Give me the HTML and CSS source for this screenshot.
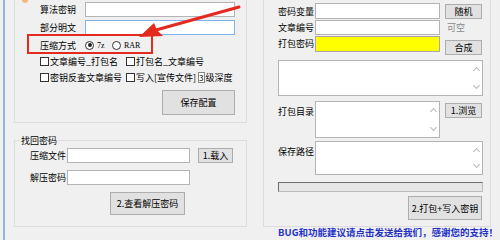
FILE: index.html
```html
<!DOCTYPE html>
<html>
<head>
<meta charset="utf-8">
<link rel="stylesheet" href="styles.css">
</head>
<body>
<div class="win">
  <div class="main">
    <div class="left">
      <div class="group upper">
        <span class="corner"></span>
        <div class="row r1"><span class="lbl">算法密钥</span><span class="inp w150"></span></div>
        <div class="row r2"><span class="lbl">部分明文</span><span class="inp w150 focus"></span></div>
        <div class="row r3"><span class="lbl">压缩方式</span>
          <span class="radio on"></span><span class="rtxt">7z</span>
          <span class="radio"></span><span class="rtxt">RAR</span>
        </div>
        <div class="row r4"><span class="cell"><span class="chk"></span>文章编号_打包名</span><span class="cell"><span class="chk"></span>打包名_文章编号</span></div>
        <div class="row r5"><span class="cell"><span class="chk"></span>密钥反查文章编号</span><span class="cell"><span class="chk"></span>写入[宣传文件]<span class="mini">3</span>级深度</span></div>
        <div class="row r6"><span class="btn big">保存配置</span></div>
      </div>
      <fieldset class="group lower">
        <legend>找回密码</legend>
        <div class="row l1"><span class="lbl2">压缩文件</span><span class="inp w123"></span><span class="btn sm">1.载入</span></div>
        <div class="row l2"><span class="lbl2">解压密码</span><span class="inp w123"></span></div>
        <div class="row l3"><span class="btn big2">2.查看解压密码</span></div>
      </fieldset>
    </div>
    <div class="group right">
      <div class="row q1"><span class="lbl3">密码变量</span><span class="inp w125"></span><span class="btn rb">随机</span></div>
      <div class="row q2"><span class="lbl3">文章编号</span><span class="inp w125"></span><span class="hint">可空</span></div>
      <div class="row q3"><span class="lbl3">打包密码</span><span class="inp w125 yellow"></span><span class="btn rb down">合成</span></div>
      <div class="area wide"><span class="sb"><i class="up"></i><i class="dn"></i></span></div>
      <div class="row q4"><span class="lbl3 top">打包目录</span><div class="area dir"><span class="sb"><i class="up"></i><i class="dn"></i></span></div><span class="btn rb">1.浏览</span></div>
      <div class="row q5"><span class="lbl3 top">保存路径</span><div class="area save"><span class="sb"><i class="up"></i><i class="dn"></i></span></div></div>
      <div class="progress"></div>
      <div class="row q6"><span class="btn big3">2.打包+写入密钥</span></div>
    </div>
  </div>
  <div class="footer">BUG和功能建议请点击发送给我们，感谢您的支持！</div>

  <div class="redbox"></div>
  <svg class="arrow" width="500" height="240" viewBox="0 0 500 240">
    <path d="M239 7 L156 30" stroke="#e42a1e" stroke-width="3" stroke-linecap="round" fill="none"/>
    <path d="M139 37 L154 23 L157 30 L163 36 Z" fill="#e42a1e"/>
  </svg>
</div>
</body>
</html>
```
FILE: styles.css
```css
html, body { margin: 0; padding: 0; }
body {
  width: 500px; height: 240px; overflow: hidden;
  background: #f0f0f0;
  font-family: "Noto Sans CJK SC", "Liberation Sans", sans-serif;
  font-size: 9px; color: #000;
}
.win {
  position: relative;
  margin-left: 3px;
  border-left: 2px solid #8fb6dc;
  height: 240px;
  box-sizing: border-box;
  display: flex; flex-direction: column;
  white-space: nowrap;
}
.main { display: flex; height: 227px; flex-shrink: 0; padding-left: 9px; }
.left { width: 233px; flex-shrink: 0; display: flex; flex-direction: column; }
.group { border: 1px solid #dcdcdc; box-sizing: border-box; position: relative; }
.upper { border-top: none; height: 123px; flex-shrink: 0; padding-left: 25px; padding-right: 11px; }
.corner { position: absolute; left: 7px; top: 0; width: 6px; height: 3px; background: #f3b97a; border-radius: 0 0 3px 3px; }
.row { display: flex; align-items: center; }
.row > * { flex-shrink: 0; }
.lbl { width: 45px; line-height: 15px; }
.inp { display: block; height: 15px; background: #fff; border: 1px solid #b4b4b4; box-sizing: border-box; }
.inp.focus { border-color: #7eb4ea; }
.w150 { width: 150px; }
.w123 { width: 123px; }
.w125 { width: 125px; }
.r1 { margin-top: 2px; }
.r2 { margin-top: 3px; }
.r3 { margin-top: 3px; height: 14px; }
.radio { width: 9px; height: 9px; border: 1px solid #333; border-radius: 50%; background: #fff; position: relative; box-sizing: border-box; }
.radio.on::after { content: ""; position: absolute; left: 1.5px; top: 1.5px; width: 4px; height: 4px; border-radius: 50%; background: #222; }
.rtxt { font-family: "Liberation Serif", serif; font-size: 8px; margin-left: 3px; width: 15px; }
.r4 { margin-top: 2px; height: 14px; }
.r5 { margin-top: 2px; height: 14px; }
.cell { display: flex; align-items: center; width: 86px; }
.chk { width: 9px; height: 9px; border: 1px solid #333; background: #fff; box-sizing: border-box; margin-right: 1px; flex-shrink: 0; }
.mini { display: inline-block; width: 11px; height: 11px; border: 1px solid #888; background: #fff; box-sizing: border-box; font-size: 8px; line-height: 9px; text-align: center; margin: 0 1px 0 2px; }
.r6 { margin-top: 6px; justify-content: flex-end; }
.btn { display: flex; align-items: center; justify-content: center; background: #e1e1e1; border: 1px solid #adadad; box-sizing: border-box; font-size: 9px; }
.big { width: 73px; height: 25px; }
.lower { margin: 10px 0 0 0; padding: 0 0 0 15px; height: 94px; min-width: 0; flex-shrink: 0; }
.lower legend { padding: 0 1px; margin-left: -10px; line-height: 15px; }
.lbl2 { width: 37px; }
.l1 { margin-top: 0; }
.sm { width: 35px; height: 15px; margin-left: 8px; }
.l2 { margin-top: 7px; }
.l3 { margin-top: 7px; padding-left: 80px; }
.big2 { width: 75px; height: 23px; }
.right { border-top: none; width: 228px; flex-shrink: 0; margin-left: 16px; padding-left: 14px; padding-right: 7px; height: 227px; }
.lbl3 { width: 37px; }
.lbl3.top { align-self: flex-start; margin-top: 4px; }
.q1 { margin-top: 3px; }
.q1 .inp { height: 16px; }
.rb { width: 37px; height: 15px; margin-left: 5px; }
.q2 { margin-top: 1px; }
.hint { color: #888; margin-left: 7px; }
.q3 { margin-top: 1px; align-items: flex-start; }
.q3 .lbl3 { line-height: 16px; }
.q3 .inp { height: 16px; }
.yellow { background: #ffff00; border-color: #a8a8a8; }
.down { margin-top: 4px; }
.area { background: #fff; border: 1px solid #b4b4b4; box-sizing: border-box; position: relative; flex-shrink: 0; }
.wide { margin-top: 5px; width: 205px; height: 36px; }
.sb { position: absolute; right: 0; top: 0; bottom: 0; width: 11px; display: flex; flex-direction: column; justify-content: space-between; align-items: center; padding: 4px 0; box-sizing: border-box; }
.sb i { display: block; width: 4px; height: 4px; border-left: 1px solid #b8b8b8; border-top: 1px solid #b8b8b8; }
.sb i.up { transform: rotate(45deg); margin-top: 3px; }
.sb i.dn { transform: rotate(225deg); margin-bottom: 3px; }
.q4 { margin-top: 5px; align-items: flex-start; }
.dir { width: 125px; height: 37px; }
.q4 .rb { margin-top: 2px; }
.q5 { margin-top: 3px; align-items: flex-start; }
.save { width: 168px; height: 34px; }
.progress { margin-top: 7px; width: 205px; height: 10px; border: 1px solid #bcbcbc; border-top-color: #6e6e6e; border-left-color: #6e6e6e; box-sizing: border-box; background: #e6e6e6; }
.q6 { margin-top: 4px; justify-content: flex-end; padding-right: 1px; }
.big3 { width: 74px; height: 24px; }
.footer { text-align: right; padding-right: 2px; color: #2430c8; font-size: 9.5px; font-weight: bold; line-height: 11px; }
.redbox { position: absolute; left: 22px; top: 34px; width: 126px; height: 20px; border: 2px solid #e42a1e; box-sizing: border-box; }
.arrow { position: absolute; left: -5px; top: 0; pointer-events: none; }
```
